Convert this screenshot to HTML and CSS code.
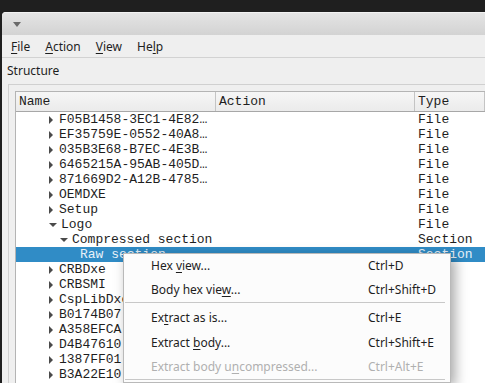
FILE: index.html
```html
<!DOCTYPE html>
<html lang="en">
<head>
    <meta charset="UTF-8" />
    <title>Structure</title>
    <link rel="stylesheet" href="styles.css">
</head>
<body>
    <div class="window">
        <div class="titlebar">
            <svg class="title-arrow" width="8" height="5" viewBox="0 0 8 5"><path d="M0 0 L8 0 L4 5 Z" fill="#6a6a6a"/></svg>
        </div>

        <div class="menubar">
            <span><u>F</u>ile</span>
            <span><u>A</u>ction</span>
            <span><u>V</u>iew</span>
            <span>He<u>l</u>p</span>
        </div>

        <div class="group-label">Structure</div>

        <div class="group">
            <div class="tree">
                <div class="tree-header">
                    <div class="col">Name</div>
                    <div class="col">Action</div>
                    <div class="col">Type</div>
                </div>

                <div class="row"><div class="name lvl1"><i class="arr"></i>F05B1458-3EC1-4E82…</div><div></div><div>File</div></div>
                <div class="row"><div class="name lvl1"><i class="arr"></i>EF35759E-0552-40A8…</div><div></div><div>File</div></div>
                <div class="row"><div class="name lvl1"><i class="arr"></i>035B3E68-B7EC-4E3B…</div><div></div><div>File</div></div>
                <div class="row"><div class="name lvl1"><i class="arr"></i>6465215A-95AB-405D…</div><div></div><div>File</div></div>
                <div class="row"><div class="name lvl1"><i class="arr"></i>871669D2-A12B-4785…</div><div></div><div>File</div></div>
                <div class="row"><div class="name lvl1"><i class="arr"></i>OEMDXE</div><div></div><div>File</div></div>
                <div class="row"><div class="name lvl1"><i class="arr"></i>Setup</div><div></div><div>File</div></div>
                <div class="row"><div class="name lvl1"><i class="arr open"></i>Logo</div><div></div><div>File</div></div>
                <div class="row"><div class="name lvl2"><i class="arr open"></i>Compressed section</div><div></div><div>Section</div></div>
                <div class="row selected"><div class="name lvl3">Raw section</div><div></div><div>Section</div></div>
                <div class="row"><div class="name lvl1"><i class="arr"></i>CRBDxe</div><div></div><div>File</div></div>
                <div class="row"><div class="name lvl1"><i class="arr"></i>CRBSMI</div><div></div><div>File</div></div>
                <div class="row"><div class="name lvl1"><i class="arr"></i>CspLibDxe</div><div></div><div>File</div></div>
                <div class="row"><div class="name lvl1"><i class="arr"></i>B0174B07</div><div></div><div>File</div></div>
                <div class="row"><div class="name lvl1"><i class="arr"></i>A358EFCA</div><div></div><div>File</div></div>
                <div class="row"><div class="name lvl1"><i class="arr"></i>D4B47610</div><div></div><div>File</div></div>
                <div class="row"><div class="name lvl1"><i class="arr"></i>1387FF01</div><div></div><div>File</div></div>
                <div class="row"><div class="name lvl1"><i class="arr"></i>B3A22E10</div><div></div><div>File</div></div>
                <div class="row"><div class="name lvl1"><i class="arr"></i>A36A1A80</div><div></div><div>File</div></div>
            </div>
        </div>
    </div>

    <!-- context menu over the selected row -->
    <div class="context-menu">
        <div class="item"><span>Hex <u>v</u>iew...</span><span class="key">Ctrl+D</span></div>
        <div class="item"><span>Body hex vie<u>w</u>...</span><span class="key">Ctrl+Shift+D</span></div>
        <div class="sep"></div>
        <div class="item"><span>Ex<u>t</u>ract as is...</span><span class="key">Ctrl+E</span></div>
        <div class="item"><span>Extract <u>b</u>ody...</span><span class="key">Ctrl+Shift+E</span></div>
        <div class="item disabled"><span>Extract body u<u>n</u>compressed...</span><span class="key">Ctrl+Alt+E</span></div>
        <div class="sep"></div>
    </div>
</body>
</html>
```

FILE: styles.css
```css
* {
    box-sizing: border-box;
}

html, body {
    height: 100%;
}

body {
    margin: 0;
    padding: 12px 0 0 2px;
    background: #1f1f1f;
    font-family: 'Noto Sans', sans-serif;
    font-size: 12px;
    color: #1e1e1e;
    overflow: hidden;
    position: relative;
}

u {
    text-decoration: underline;
    text-underline-offset: 2px;
}

.window {
    height: 100%;
    background: #efefef;
    border-top-left-radius: 4px;
    overflow: hidden;
}

.titlebar {
    height: 23px;
    background: linear-gradient(#e4e4e4, #d3d3d3);
    border-top: 1px solid #f2f2f2;
    padding: 9px 0 0 11px;
}

    .title-arrow {
        display: block;
    }

.menubar {
    display: flex;
    height: 23px;
    align-items: center;
    gap: 15px;
    padding-left: 9px;
    border-bottom: 1px solid #d2d2d2;
    font-size: 12px;
}

.group-label {
    height: 26px;
    line-height: 26px;
    padding-left: 5px;
    font-size: 12px;
}

.group {
    margin-left: 6px;
    padding: 6px 0 0 6px;
    border-top: 1px solid #d0d0d0;
    border-left: 1px solid #d0d0d0;
    height: 100%;
}

.tree {
    background: #fff;
    border: 1px solid #b4b4b4;
    border-right: none;
    height: 100%;
    font-family: 'Liberation Mono', monospace;
    font-size: 13px;
}

.tree-header {
    display: grid;
    grid-template-columns: 200px 199px 1fr;
    height: 20px;
    background: linear-gradient(#f6f6f6, #ebebeb);
    border-bottom: 1px solid #a7a7a7;
}

    .tree-header .col {
        padding: 2px 0 0 3px;
        border-right: 1px solid #c4c4c4;
        white-space: nowrap;
    }

.row {
    display: grid;
    grid-template-columns: 200px 199px 1fr;
    height: 15px;
    line-height: 15px;
    white-space: nowrap;
}

    .row > div {
        padding-left: 3px;
    }

    .row.selected {
        background: #308cc6;
        color: #e8f1f8;
    }

.name {
    display: flex;
    align-items: center;
}

.lvl1 {
    padding-left: 33px !important;
}

.lvl2 {
    padding-left: 44px !important;
}

.lvl3 {
    padding-left: 64px !important;
}

.arr {
    width: 0;
    height: 0;
    margin-right: 6px;
    border-top: 4px solid transparent;
    border-bottom: 4px solid transparent;
    border-left: 4px solid #4a4a4a;
}

    .arr.open {
        margin-right: 4px;
        border-left: 4px solid transparent;
        border-right: 4px solid transparent;
        border-top: 4px solid #4a4a4a;
        border-bottom: none;
    }

.context-menu {
    position: absolute;
    left: 123px;
    top: 253px;
    width: 328px;
    background: #fcfcfc;
    border: 1px solid #b9b9b9;
    box-shadow: 4px 4px 12px rgba(0, 0, 0, 0.35);
    font-size: 12px;
}

    .context-menu .item {
        display: flex;
        justify-content: space-between;
        height: 24px;
        align-items: center;
        padding: 0 0 1px 27px;
    }

    .context-menu .item:nth-child(4),
    .context-menu .item:nth-child(5) {
        height: 25px;
    }

    .context-menu .key {
        width: 82px;
    }

    .context-menu .disabled {
        color: #b0b0b0;
    }

    .context-menu .sep {
        height: 3px;
        margin: 0 5px 0 1px;
        border-top: 1px solid #c8c8c8;
    }
```
